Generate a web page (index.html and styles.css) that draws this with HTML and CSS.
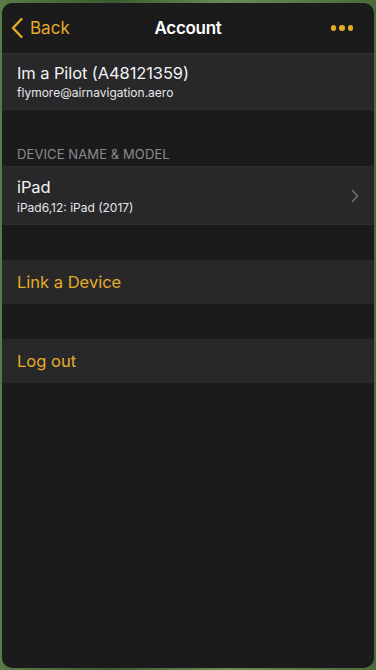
FILE: index.html
```html
<!DOCTYPE html>
<html>
<head>
<meta charset="utf-8">
<link rel="stylesheet" href="styles.css">
</head>
<body>
<div class="panel">
  <header class="nav">
    <a class="back">
      <svg width="12" height="22" viewBox="0 0 12 22"><path d="M10.5 2 L2 11 L10.5 20" fill="none" stroke="#e5ab27" stroke-width="2.4" stroke-linecap="round" stroke-linejoin="round"/></svg>
      <span>Back</span>
    </a>
    <h1 class="title">Account</h1>
    <div class="more"><i></i><i></i><i></i></div>
  </header>
  <div class="row two">
    <div class="main">Im a Pilot (A48121359)</div>
    <div class="sub">flymore@airnavigation.aero</div>
  </div>
  <div class="section-head">DEVICE NAME &amp; MODEL</div>
  <div class="row two chev">
    <div class="texts">
      <div class="main">iPad</div>
      <div class="sub">iPad6,12: iPad (2017)</div>
    </div>
    <svg width="8" height="14" viewBox="0 0 8 14"><path d="M1.5 1.5 L6.5 7 L1.5 12.5" fill="none" stroke="#6b6b6e" stroke-width="1.8" stroke-linecap="round" stroke-linejoin="round"/></svg>
  </div>
  <div class="spacer"></div>
  <div class="row action">Link a Device</div>
  <div class="spacer"></div>
  <div class="row action">Log out</div>
</div>
</body>
</html>
```
FILE: styles.css
```css
html, body {
  margin: 0;
  padding: 0;
  height: 100%;
}
body {
  background: linear-gradient(90deg, #5a7a45 0, #3d5a30 30%, #6b8a55 60%, #4a6a3a 100%);
  font-family: "Inter", "Liberation Sans", sans-serif;
  overflow: hidden;
}
.panel {
  box-sizing: border-box;
  margin: 3px 2px 0 2px;
  height: 665px;
  background: #1b1b1c;
  border-radius: 10px;
  overflow: hidden;
}
.nav {
  height: 50px;
  display: grid;
  grid-template-columns: 1fr auto 1fr;
  align-items: center;
  padding: 0 21px;
  border-bottom: 1px solid #2f2f31;
}
.back {
  display: flex;
  align-items: center;
  gap: 7px;
  margin-left: -12px;
  color: #e5ab27;
  font-size: 17px;
}
.title {
  margin: 0;
  color: #fff;
  font-size: 17px;
  font-weight: 600;
  letter-spacing: -0.3px;
}
.more {
  justify-self: end;
  display: flex;
  gap: 3px;
}
.more i {
  width: 5.5px;
  height: 5.5px;
  border-radius: 50%;
  background: #e5ab27;
}
.row {
  background: #28282a;
  padding: 0 15px;
  box-sizing: border-box;
}
.row.two {
  height: 56px;
  display: flex;
  flex-direction: column;
  justify-content: center;
  gap: 2px;
  border-bottom: 1px solid #2f2f31;
}
.row.chev {
  height: 59px;
  flex-direction: row;
  align-items: center;
  justify-content: space-between;
  padding-right: 15px;
  border-top: 1px solid #2f2f31;
}
.texts {
  display: flex;
  flex-direction: column;
  gap: 3px;
}
.main {
  color: #f2f2f2;
  font-size: 16.5px;
  letter-spacing: -0.1px;
}
.sub {
  color: #e6e6e6;
  font-size: 12px;
}
.section-head {
  height: 56px;
  box-sizing: border-box;
  padding: 36px 15px 0;
  color: #8a8a8e;
  font-size: 13px;
  letter-spacing: 0.1px;
}
.spacer {
  height: 35px;
}
.row.action {
  height: 44px;
  display: flex;
  align-items: center;
  color: #e5ab27;
  font-size: 16.5px;
}
```
